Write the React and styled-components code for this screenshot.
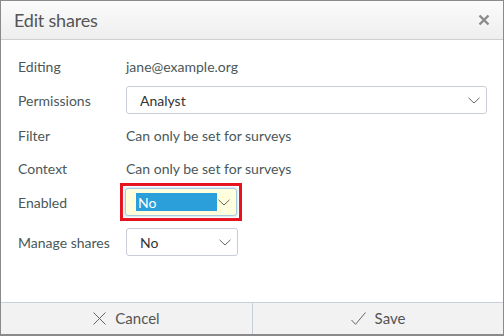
import React from "react";
import styled, { createGlobalStyle } from "styled-components";

const Global = createGlobalStyle`
  html, body { margin: 0; padding: 0; background: #fff; }
  body { font-family: Lato, "Open Sans", sans-serif; }
`;

const Dialog = styled.div`
  box-sizing: border-box;
  width: 504px;
  height: 336px;
  border: 1px solid #8a8a8a;
  border-bottom-width: 2px;
  display: flex;
  flex-direction: column;
  background: #fff;
  font-family: Lato, "Open Sans", sans-serif;
`;

const Header = styled.div`
  height: 38px;
  flex: none;
  display: flex;
  align-items: center;
  justify-content: space-between;
  padding: 0 13px 0 13px;
  background: linear-gradient(#fbfbfb, #eeeeee);
  border-bottom: 1px solid #cfcfcf;
`;

const Title = styled.h1`
  margin: 0;
  font-size: 18px;
  font-weight: 400;
  color: #555;
  letter-spacing: -0.2px;
`;

const Close = styled.button`
  border: 0;
  background: none;
  padding: 0;
  width: 12px;
  height: 12px;
  display: flex;
  cursor: pointer;
`;

const Body = styled.div`
  flex: 1;
  padding: 12px 16px 0 17px;
  display: flex;
  flex-direction: column;
`;

const Row = styled.div`
  display: grid;
  grid-template-columns: 108px 1fr;
  grid-template-rows: 28px;
  align-items: center;
  height: 28px;
  margin-top: ${(p) => p.$gap ?? 6}px;
  font-size: 14px;
  color: #4a5859;
`;

const Label = styled.div``;
const Value = styled.div``;

const FocusFrame = styled.div`
  justify-self: start;
  margin: -5px 0 -5px -6px;
  padding: 2px;
  border: 3px solid #e8121e;
  display: flex;
`;

const Select = styled.div`
  box-sizing: border-box;
  width: ${(p) => (p.$width ? `${p.$width}px` : "100%")};
  height: 28px;
  display: flex;
  align-items: center;
  justify-content: space-between;
  padding: 0 6px 0 ${(p) => (p.$focus ? 10 : 13)}px;
  border: 1px solid ${(p) => (p.$focus ? "#a9cbe0" : "#c9ced6")};
  border-radius: 3px;
  background: ${(p) => (p.$focus ? "#ffffde" : "#fff")};
  box-shadow: ${(p) => (p.$focus ? "0 0 2px 1px #d3e8ef" : "none")};
  color: #333;
  font-size: 14px;
`;

const Highlight = styled.span`
  display: flex;
  align-items: center;
  width: 81px;
  height: 18px;
  padding-left: 2px;
  box-sizing: border-box;
  background: #2b9fda;
  color: #fff;
`;

const Chevron = () => (
  <svg width="12" height="7" viewBox="0 0 12 7" fill="none">
    <path d="M0.5 0.8 L6 6 L11.5 0.8" stroke="#666" strokeWidth="1" />
  </svg>
);

const Footer = styled.div`
  height: 31px;
  flex: none;
  display: grid;
  grid-template-columns: 251px 1fr;
  border-top: 1px solid #c8cfda;
  background: #f2f2f2;
`;

const FootButton = styled.button`
  border: 0;
  border-left: ${(p) => (p.$divider ? "1px solid #c8cfda" : "0")};
  background: transparent;
  display: flex;
  align-items: center;
  justify-content: center;
  gap: 9px;
  font-family: Lato, "Open Sans", sans-serif;
  font-size: 15px;
  color: #555;
  padding: 0 0 1px;
  cursor: pointer;
`;

export default function App() {
  return (
    <>
      <Global />
      <Dialog>
        <Header>
          <Title>Edit shares</Title>
          <Close aria-label="close">
            <svg width="12" height="12" viewBox="0 0 12 12">
              <path d="M1.5 1.5 L10.5 10.5 M10.5 1.5 L1.5 10.5" stroke="#8a8a8a" strokeWidth="2.4" />
            </svg>
          </Close>
        </Header>
        <Body>
          <Row $gap={0}>
            <Label>Editing</Label>
            <Value>jane@example.org</Value>
          </Row>
          <Row>
            <Label>Permissions</Label>
            <Select>
              <span>Analyst</span>
              <Chevron />
            </Select>
          </Row>
          <Row $gap={7}>
            <Label>Filter</Label>
            <Value>Can only be set for surveys</Value>
          </Row>
          <Row $gap={5}>
            <Label>Context</Label>
            <Value>Can only be set for surveys</Value>
          </Row>
          <Row $gap={6}>
            <Label>Enabled</Label>
            <FocusFrame>
              <Select $focus $width={112}>
                <Highlight>No</Highlight>
                <Chevron />
              </Select>
            </FocusFrame>
          </Row>
          <Row $gap={12}>
            <Label>Manage shares</Label>
            <Select $width={112}>
              <span>No</span>
              <Chevron />
            </Select>
          </Row>
        </Body>
        <Footer>
          <FootButton>
            <svg width="13" height="13" viewBox="0 0 13 13">
              <path d="M0.5 0.5 L12.5 12.5 M12.5 0.5 L0.5 12.5" stroke="#666" strokeWidth="1" />
            </svg>
            Cancel
          </FootButton>
          <FootButton $divider>
            <svg width="15" height="13" viewBox="0 0 15 13">
              <path d="M0.5 8 L4.5 12.3 L14.5 0.5" stroke="#666" strokeWidth="1" fill="none" />
            </svg>
            Save
          </FootButton>
        </Footer>
      </Dialog>
    </>
  );
}
